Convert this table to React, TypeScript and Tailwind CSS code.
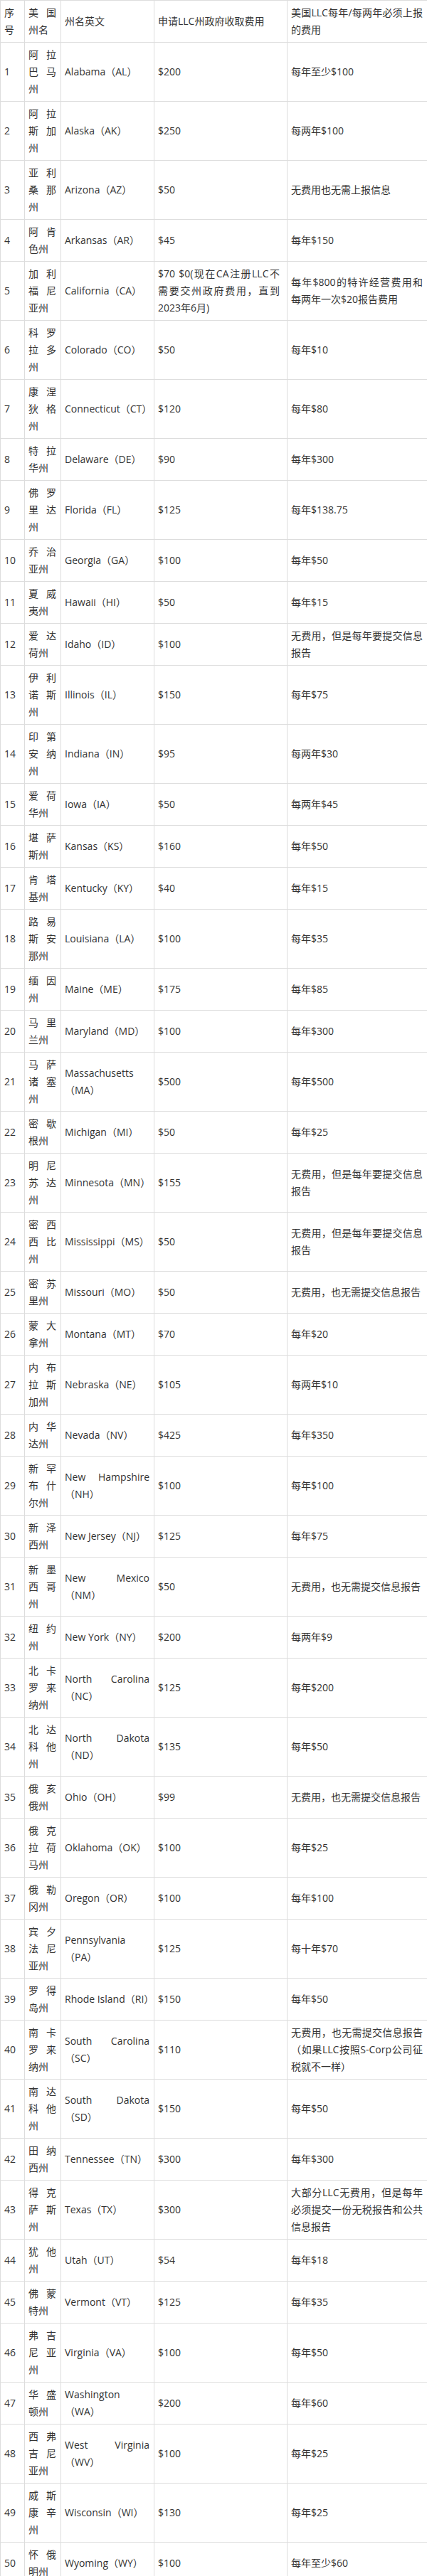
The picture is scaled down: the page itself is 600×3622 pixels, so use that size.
import React from "react";

type Row = [string, string, string, string, string];

const rows: Row[] = [
  ["1", "阿拉巴马州", "Alabama（AL）", "$200", "每年至少$100"],
  ["2", "阿拉斯加州", "Alaska（AK）", "$250", "每两年$100"],
  ["3", "亚利桑那州", "Arizona（AZ）", "$50", "无费用也无需上报信息"],
  ["4", "阿肯色州", "Arkansas（AR）", "$45", "每年$150"],
  ["5", "加利福尼亚州", "California（CA）", "$70 $0(现在CA注册LLC不需要交州政府费用，直到2023年6月)", "每年$800的特许经营费用和每两年一次$20报告费用"],
  ["6", "科罗拉多州", "Colorado（CO）", "$50", "每年$10"],
  ["7", "康涅狄格州", "Connecticut（CT）", "$120", "每年$80"],
  ["8", "特拉华州", "Delaware（DE）", "$90", "每年$300"],
  ["9", "佛罗里达州", "Florida（FL）", "$125", "每年$138.75"],
  ["10", "乔治亚州", "Georgia（GA）", "$100", "每年$50"],
  ["11", "夏威夷州", "Hawaii（HI）", "$50", "每年$15"],
  ["12", "爱达荷州", "Idaho（ID）", "$100", "无费用，但是每年要提交信息报告"],
  ["13", "伊利诺斯州", "Illinois（IL）", "$150", "每年$75"],
  ["14", "印第安纳州", "Indiana（IN）", "$95", "每两年$30"],
  ["15", "爱荷华州", "Iowa（IA）", "$50", "每两年$45"],
  ["16", "堪萨斯州", "Kansas（KS）", "$160", "每年$50"],
  ["17", "肯塔基州", "Kentucky（KY）", "$40", "每年$15"],
  ["18", "路易斯安那州", "Louisiana（LA）", "$100", "每年$35"],
  ["19", "缅因州", "Maine（ME）", "$175", "每年$85"],
  ["20", "马里兰州", "Maryland（MD）", "$100", "每年$300"],
  ["21", "马萨诸塞州", "Massachusetts（MA）", "$500", "每年$500"],
  ["22", "密歇根州", "Michigan（MI）", "$50", "每年$25"],
  ["23", "明尼苏达州", "Minnesota（MN）", "$155", "无费用，但是每年要提交信息报告"],
  ["24", "密西西比州", "Mississippi（MS）", "$50", "无费用，但是每年要提交信息报告"],
  ["25", "密苏里州", "Missouri（MO）", "$50", "无费用，也无需提交信息报告"],
  ["26", "蒙大拿州", "Montana（MT）", "$70", "每年$20"],
  ["27", "内布拉斯加州", "Nebraska（NE）", "$105", "每两年$10"],
  ["28", "内华达州", "Nevada（NV）", "$425", "每年$350"],
  ["29", "新罕布什尔州", "New Hampshire（NH）", "$100", "每年$100"],
  ["30", "新泽西州", "New Jersey（NJ）", "$125", "每年$75"],
  ["31", "新墨西哥州", "New Mexico（NM）", "$50", "无费用，也无需提交信息报告"],
  ["32", "纽约州", "New York（NY）", "$200", "每两年$9"],
  ["33", "北卡罗来纳州", "North Carolina（NC）", "$125", "每年$200"],
  ["34", "北达科他州", "North Dakota（ND）", "$135", "每年$50"],
  ["35", "俄亥俄州", "Ohio（OH）", "$99", "无费用，也无需提交信息报告"],
  ["36", "俄克拉荷马州", "Oklahoma（OK）", "$100", "每年$25"],
  ["37", "俄勒冈州", "Oregon（OR）", "$100", "每年$100"],
  ["38", "宾夕法尼亚州", "Pennsylvania（PA）", "$125", "每十年$70"],
  ["39", "罗得岛州", "Rhode Island（RI）", "$150", "每年$50"],
  ["40", "南卡罗来纳州", "South Carolina（SC）", "$110", "无费用，也无需提交信息报告（如果LLC按照S-Corp公司征税就不一样）"],
  ["41", "南达科他州", "South Dakota（SD）", "$150", "每年$50"],
  ["42", "田纳西州", "Tennessee（TN）", "$300", "每年$300"],
  ["43", "得克萨斯州", "Texas（TX）", "$300", "大部分LLC无费用，但是每年必须提交一份无税报告和公共信息报告"],
  ["44", "犹他州", "Utah（UT）", "$54", "每年$18"],
  ["45", "佛蒙特州", "Vermont（VT）", "$125", "每年$35"],
  ["46", "弗吉尼亚州", "Virginia（VA）", "$100", "每年$50"],
  ["47", "华盛顿州", "Washington（WA）", "$200", "每年$60"],
  ["48", "西弗吉尼亚州", "West Virginia（WV）", "$100", "每年$25"],
  ["49", "威斯康辛州", "Wisconsin（WI）", "$130", "每年$25"],
  ["50", "怀俄明州", "Wyoming（WY）", "$100", "每年至少$60"],
];

const header: Row = ["序号", "美国州名", "州名英文", "申请LLC州政府收取费用", "美国LLC每年/每两年必须上报的费用"];

const base =
  "border border-[#dddddd] pl-[5px] py-[5px] align-middle text-justify break-words";

const pads = ["pr-[6px]", "pr-[6px]", "pr-[6px]", "pr-[10px]", "pr-[6px]"];

export default function App() {
  return (
    <div className="w-[600px] bg-white font-['Open_Sans','Noto_Sans_CJK_SC',sans-serif] text-[14px] leading-[24px] text-[#333333]">
      <table className="w-[600px] table-fixed border-collapse">
        <colgroup>
          <col className="w-[34px]" />
          <col className="w-[51px]" />
          <col className="w-[131px]" />
          <col className="w-[187px]" />
          <col className="w-[197px]" />
        </colgroup>
        <thead>
          <tr>
            {header.map((h, i) => (
              <th key={i} className={`${base} ${pads[i]} font-normal`}>
                {h}
              </th>
            ))}
          </tr>
        </thead>
        <tbody>
          {rows.map((r) => (
            <tr key={r[0]}>
              {r.map((c, i) => (
                <td key={i} className={`${base} ${pads[i]}`}>
                  {c}
                </td>
              ))}
            </tr>
          ))}
        </tbody>
      </table>
    </div>
  );
}
